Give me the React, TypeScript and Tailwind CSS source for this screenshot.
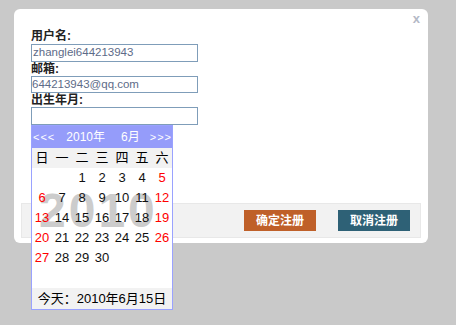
import React from "react";

const weeks: (number | null)[][] = [
  [null, null, 1, 2, 3, 4, 5],
  [6, 7, 8, 9, 10, 11, 12],
  [13, 14, 15, 16, 17, 18, 19],
  [20, 21, 22, 23, 24, 25, 26],
  [27, 28, 29, 30, null, null, null],
  [null, null, null, null, null, null, null],
];

const font = { fontFamily: '"Liberation Sans", "Noto Sans CJK SC", sans-serif' };

export default function App() {
  return (
    <div
      className="w-[456px] h-[325px] bg-[#c9c9c9] pt-[9px] pl-[14px] overflow-hidden"
      style={font}
    >
      <div className="relative w-[414px] h-[234px] bg-white rounded-[6px] flex flex-col">
        <span className="absolute right-[8px] top-[2px] text-[13px] font-bold text-[#b4b9c6] leading-[16px]">
          x
        </span>
        <div className="pt-[20px] pl-[17px] flex flex-col">
          <label className="text-[12px] font-bold text-[#222] leading-[15px] h-[15px]">用户名:</label>
          <div className="w-[167px] h-[18px] border border-[#7f9db9] flex items-center pl-[1px] text-[11.5px] text-[#5d6b88]">
            zhanglei644213943
          </div>
          <label className="text-[12px] font-bold text-[#222] leading-[14px] h-[14px]">邮箱:</label>
          <div className="w-[167px] h-[17px] border border-[#7f9db9] flex items-center pl-[0px] text-[11.5px] text-[#5d6b88]">
            644213943@qq.com
          </div>
          <label className="text-[12px] font-bold text-[#222] leading-[14px] h-[14px]">出生年月:</label>
          <div className="w-[167px] h-[18px] border border-[#7f9db9]"></div>
        </div>
        <div className="mt-auto mx-[7px] mb-[5px] h-[35px] bg-[#f2f2f2] border border-[#e8e8e8] flex items-center justify-end pr-[10px] gap-[22px]">
          <button className="w-[72px] h-[21px] bg-[#bf6029] text-white text-[12px] font-bold flex items-center justify-center">
            确定注册
          </button>
          <button className="w-[72px] h-[21px] bg-[#2e6176] text-white text-[12px] font-bold flex items-center justify-center">
            取消注册
          </button>
        </div>

        {/* calendar popup */}
        <div className="absolute left-[17px] top-[116px] w-[142px] border border-[#9aa2ff] bg-white">
          <div className="h-[22px] bg-[#959cfa] text-white flex items-center text-[12px] leading-none">
            <span className="ml-[1px] text-[11px] tracking-[1px]">&lt;&lt;&lt;</span>
            <span className="ml-[11px]">2010年</span>
            <span className="ml-[16px]">6月</span>
            <span className="ml-auto text-[11px] tracking-[1px]">&gt;&gt;&gt;</span>
          </div>
          <div className="grid grid-cols-[repeat(7,20px)] h-[20px] bg-[#f2f2f2] text-[13px] text-black items-center">
            {["日", "一", "二", "三", "四", "五", "六"].map((d) => (
              <span key={d} className="text-center leading-[20px]">{d}</span>
            ))}
          </div>
          <div className="relative">
            <span
              className="absolute left-[7px] top-[19px] text-[48px] font-bold leading-none tracking-[3px] text-[#cccccc] select-none"
            >
              2010
            </span>
            <div className="relative grid grid-cols-[repeat(7,20px)] text-[13px]">
              {weeks.flat().map((d, i) => {
                const col = i % 7;
                const red = col === 0 || col === 6;
                return (
                  <span
                    key={i}
                    className={
                      "h-[20px] leading-[20px] text-center " +
                      (red ? "text-[#ff0000]" : "text-[#111]")
                    }
                  >
                    {d ?? ""}
                  </span>
                );
              })}
            </div>
          </div>
          <div className="h-[21px] bg-[#f2f2f2] text-[13px] text-black flex items-center justify-center">
            今天：2010年6月15日
          </div>
        </div>
      </div>
    </div>
  );
}
